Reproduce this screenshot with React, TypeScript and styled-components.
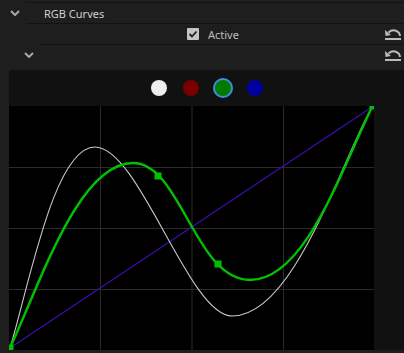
import React from "react";
import styled, { createGlobalStyle } from "styled-components";

const GlobalStyle = createGlobalStyle`
    html, body {
        margin: 0;
        padding: 0;
        background: #1e1e1e;
    }
    body {
        font-family: "Noto Sans", "Open Sans", sans-serif;
    }
`;

const Page = styled.div`
    width: 404px;
    height: 353px;
    overflow: hidden;
    background: #1e1e1e;
    padding-top: 2px;
    box-sizing: border-box;
    display: flex;
    flex-direction: column;
`;

const Divider = styled.div<{ $inset: number }>`
    height: 1px;
    margin-left: ${(p) => p.$inset}px;
    background: #121212;
`;

const Row = styled.div`
    height: 20px;
    display: flex;
    align-items: center;
    position: relative;
`;

const ChevronSlot = styled.div<{ $left: number }>`
    width: ${(p) => p.$left + 10}px;
    padding-left: ${(p) => p.$left}px;
    box-sizing: border-box;
    display: flex;
    align-items: center;
`;

const Title = styled.span`
    margin-left: 24px;
    font-size: 11px;
    color: #cfcfcf;
`;

const ActiveGroup = styled.label`
    margin-left: 187px;
    display: flex;
    align-items: center;
    gap: 9px;
    font-size: 11px;
    color: #bdbdbd;
`;

const Checkbox = styled.span`
    width: 12px;
    height: 12px;
    border-radius: 1px;
    background: #c4c4c4;
    display: flex;
    align-items: center;
    justify-content: center;
`;

const ResetButton = styled.button`
    margin-left: auto;
    margin-right: 3px;
    width: 16px;
    height: 12px;
    padding: 0;
    border: none;
    background: none;
    display: flex;
`;

const Panel = styled.div`
    margin-top: 5px;
    margin-left: 9px;
    background: #111111;
    display: flex;
    flex-direction: column;
`;

const ChannelBar = styled.div`
    height: 36px;
    display: flex;
    align-items: center;
    justify-content: center;
    gap: 16px;
`;

const Dot = styled.span<{ $color: string; $selected?: boolean }>`
    width: 16px;
    height: 16px;
    border-radius: 50%;
    background: ${(p) => p.$color};
    box-shadow: ${(p) => (p.$selected ? "0 0 0 2px #3f8fdc" : "none")};
`;

const Canvas = styled.svg`
    display: block;
    width: 365px;
    height: 244px;
    background: #000;
`;

const Chevron = () => (
    <svg width="10" height="6" viewBox="0 0 10 6">
        <polyline points="1,1 5,5 9,1" fill="none" stroke="#a8a8a8" strokeWidth="2" />
    </svg>
);

const ResetIcon = () => (
    <svg width="16" height="12" viewBox="0 0 16 12">
        <path d="M15 8 C14.5 2.5 8 0.5 3.5 4.5" fill="none" stroke="#bcbcbc" strokeWidth="2" />
        <polygon points="0,2 0.5,8 6,7" fill="#bcbcbc" />
        <rect x="0" y="10" width="16" height="2" fill="#bcbcbc" />
    </svg>
);

const W = 365;
const H = 244;
const gridX = [91.5, 183, 274.5];
const gridY = [61, 122, 183];

const whiteCurve =
    "M1,242 C20,180 45,41 86,41 C130,41 180,210 223,210 C285,210 330,60 363,1";
const greenCurve =
    "M1,242 C32,175 70,57 124,57 C172,57 186,174 241,174 C295,174 330,70 363,1";

const points: [number, number][] = [
    [1, 242],
    [149, 70],
    [209, 158],
    [364, 0],
];

const CurveGraph = () => (
    <Canvas viewBox={`0 0 ${W} ${H}`}>
        {gridX.map((x) => (
            <line key={"x" + x} x1={x} y1={0} x2={x} y2={H} stroke="#2b2b2b" strokeWidth="1" />
        ))}
        {gridY.map((y) => (
            <line key={"y" + y} x1={0} y1={y + 0.5} x2={W} y2={y + 0.5} stroke="#2b2b2b" strokeWidth="1" />
        ))}
        <line x1={1} y1={242} x2={363} y2={1} stroke="#3d0ea6" strokeWidth="1.3" />
        <path d={whiteCurve} fill="none" stroke="#c9c9c9" strokeWidth="1.1" />
        <path d={greenCurve} fill="none" stroke="#00c000" strokeWidth="2.4" />
        {points.map(([x, y]) => (
            <rect key={x} x={x - 3.5} y={y - 3.5} width="7" height="7" fill="#00c000" />
        ))}
    </Canvas>
);

const App: React.FC = () => {
    return (
        <>
            <GlobalStyle />
            <Page>
                <Divider $inset={26} />
                <Row>
                    <ChevronSlot $left={10}>
                        <Chevron />
                    </ChevronSlot>
                    <Title>RGB Curves</Title>
                </Row>
                <Divider $inset={26} />
                <Row>
                    <ActiveGroup>
                        <Checkbox>
                            <svg width="10" height="8" viewBox="0 0 10 8">
                                <polyline points="1.5,4 4,6.5 8.5,1.5" fill="none" stroke="#1e1e1e" strokeWidth="1.8" />
                            </svg>
                        </Checkbox>
                        Active
                    </ActiveGroup>
                    <ResetButton>
                        <ResetIcon />
                    </ResetButton>
                </Row>
                <Divider $inset={40} />
                <Row>
                    <ChevronSlot $left={24}>
                        <Chevron />
                    </ChevronSlot>
                    <ResetButton>
                        <ResetIcon />
                    </ResetButton>
                </Row>
                <Panel>
                    <ChannelBar>
                        <Dot $color="#eeeeee" />
                        <Dot $color="#7a0000" />
                        <Dot $color="#007a00" $selected />
                        <Dot $color="#0000a0" />
                    </ChannelBar>
                    <CurveGraph />
                </Panel>
            </Page>
        </>
    );
};

export default App;
